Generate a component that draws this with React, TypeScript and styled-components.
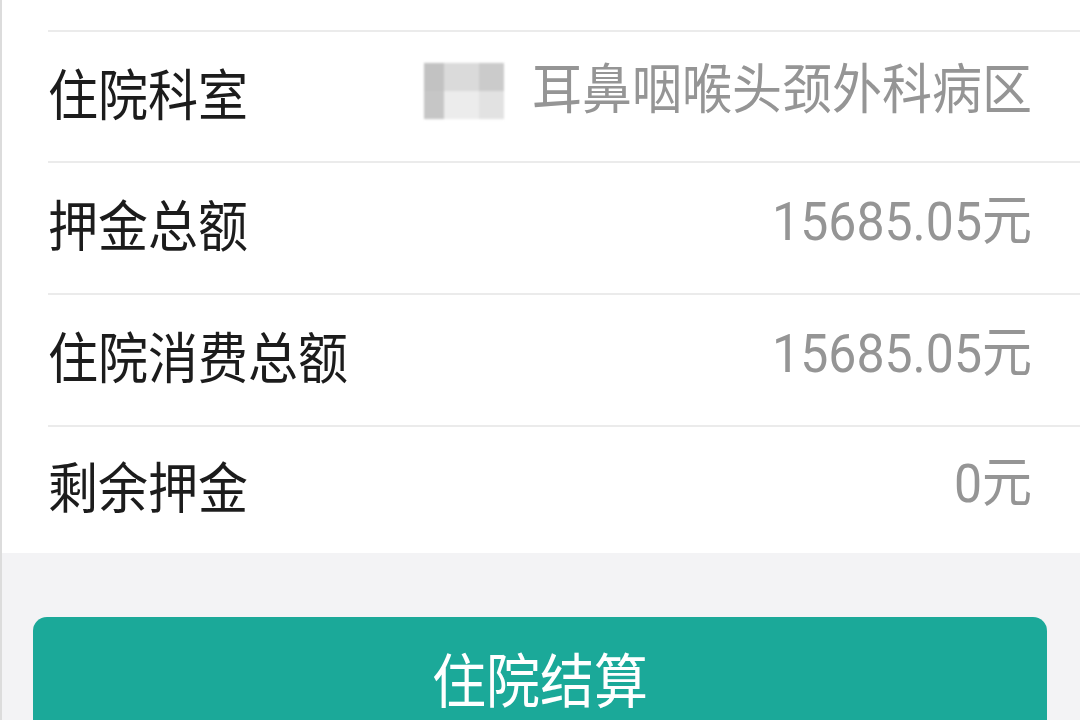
import React from "react";
import styled, { createGlobalStyle } from "styled-components";

const Global = createGlobalStyle`
  html, body { margin: 0; padding: 0; background: #f3f3f5; }
  body { font-family: Roboto, "Noto Sans CJK SC", "Noto Sans", sans-serif; }
`;

const Page = styled.div`
  width: 1080px;
  height: 720px;
  overflow: hidden;
  background: #f3f3f5;
  border-left: 2px solid #dcdcdc;
  box-sizing: border-box;
`;

const Card = styled.div`
  background: #ffffff;
  padding-top: 30px;
  display: flex;
  flex-direction: column;
`;

const Row = styled.div<{ $h: number }>`
  height: ${(p) => p.$h}px;
  margin-left: 46px;
  padding-right: 48px;
  padding-bottom: 12px;
  border-top: 2px solid #ebebeb;
  box-sizing: border-box;
  display: flex;
  align-items: center;
  justify-content: space-between;
`;

const Label = styled.span`
  font-family: "Noto Sans CJK SC", sans-serif;
  font-size: 50px;
  color: #1c1c1c;
  line-height: 1;
  transform: scaleY(1.1);
`;

const Value = styled.span`
  display: flex;
  align-items: center;
  font-size: 50px;
  color: #959595;
  line-height: 1;
  transform: scaleY(1.08);
`;

const Mosaic = styled.span`
  display: grid;
  grid-template-columns: 20px 35px 25px;
  grid-template-rows: 26px 26px;
  margin-right: 28px;
  filter: blur(0.8px);
`;

const Cell = styled.span<{ $c: string }>`
  background: ${(p) => p.$c};
`;

const Footer = styled.div`
  padding: 64px 33px 0 31px;
`;

const Button = styled.button`
  width: 100%;
  height: 140px;
  border: none;
  border-radius: 14px;
  background: #1ba999;
  color: #ffffff;
  font-family: "Noto Sans CJK SC", sans-serif;
  font-size: 54px;
  display: flex;
  justify-content: center;
  align-items: flex-start;
  padding-top: 34px;
  box-sizing: border-box;
  line-height: 1;
`;

const ButtonText = styled.span`
  display: inline-block;
  transform: scaleY(1.1);
`;

const rows = [
  { label: "住院科室", value: "耳鼻咽喉头颈外科病区", mosaic: true, h: 131 },
  { label: "押金总额", value: "15685.05元", h: 132 },
  { label: "住院消费总额", value: "15685.05元", h: 132 },
  { label: "剩余押金", value: "0元", h: 128 },
];

const cells = ["#c2c2c2", "#dadada", "#cbcbcb", "#c6c6c6", "#ececec", "#e2e2e2"];

export default function App() {
  return (
    <>
      <Global />
      <Page>
        <Card>
          {rows.map((r) => (
            <Row key={r.label} $h={r.h}>
              <Label>{r.label}</Label>
              <Value>
                {r.mosaic && (
                  <Mosaic>
                    {cells.map((c, i) => (
                      <Cell key={i} $c={c} />
                    ))}
                  </Mosaic>
                )}
                {r.value}
              </Value>
            </Row>
          ))}
        </Card>
        <Footer>
          <Button>
            <ButtonText>住院结算</ButtonText>
          </Button>
        </Footer>
      </Page>
    </>
  );
}
